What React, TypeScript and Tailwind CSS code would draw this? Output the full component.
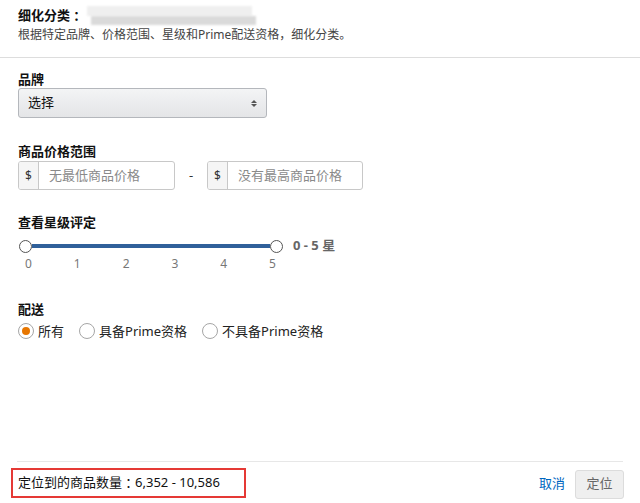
import React from "react";

const font = { fontFamily: "'Noto Sans', 'Noto Sans CJK SC', sans-serif" };
const colonFont = { fontFamily: "'Noto Sans CJK TC', sans-serif" };

function Radio({ checked, label }: { checked?: boolean; label: string }) {
  return (
    <label className="flex items-center gap-[4px] text-[13px] leading-[18px] text-[#222]">
      <span className="flex h-[16px] w-[16px] items-center justify-center rounded-full border border-[#a6a6a6] bg-white">
        {checked && <span className="h-[8px] w-[8px] rounded-full bg-[#e77600]" />}
      </span>
      <span>{label}</span>
    </label>
  );
}

function PriceInput({ width, placeholder }: { width: string; placeholder: string }) {
  return (
    <div className={`flex h-[29px] ${width} overflow-hidden rounded-[3px] border border-[#c8c8c8] bg-white`}>
      <span className="flex w-[20px] shrink-0 items-center justify-center border-r border-[#c8c8c8] bg-[#f5f5f5] text-[12px] text-[#333]">
        $
      </span>
      <span className="flex items-center pl-[10px] text-[13px] text-[#8a8a8a]">{placeholder}</span>
    </div>
  );
}

export default function App() {
  return (
    <div className="flex h-[503px] w-[640px] flex-col bg-white" style={font}>
      {/* header */}
      <div className="border-b border-[#dddddd] px-[18px] pt-[6px] pb-[13px]">
        <div className="flex h-[20px] items-center text-[13px] font-bold text-[#111]">
          <span>细化分类</span>
          <span style={colonFont}>：</span>
          <span className="relative ml-[2px] h-[20px] w-[175px]">
            <span className="absolute left-[2px] top-[0px] h-[10px] w-[165px] bg-[#efefef] blur-[1px]" />
            <span className="absolute left-[6px] top-[10px] h-[9px] w-[165px] bg-[#dadada] blur-[1px]" />
          </span>
        </div>
        <div className="h-[18px] text-[12px] leading-[18px] text-[#444]">
          根据特定品牌、价格范围、星级和Prime配送资格，细化分类。
        </div>
      </div>

      {/* body */}
      <div className="flex flex-1 flex-col px-[18px]">
        <div className="mt-[12px] text-[13px] font-bold leading-[18px] text-[#111]">品牌</div>
        <div className="flex h-[30px] w-[249px] items-center justify-between rounded-[3px] border border-[#b4b7bc] bg-gradient-to-b from-[#f3f4f5] to-[#e4e5e7] pl-[9px] pr-[9px]">
          <span className="text-[13px] text-[#111]">选择</span>
          <span className="flex flex-col items-center gap-[1px]">
            <span className="h-0 w-0 border-x-[3px] border-b-[3px] border-x-transparent border-b-[#555]" />
            <span className="h-0 w-0 border-x-[3px] border-t-[3px] border-x-transparent border-t-[#555]" />
          </span>
        </div>

        <div className="mt-[24px] text-[13px] font-bold leading-[18px] text-[#111]">商品价格范围</div>
        <div className="mt-[1px] flex items-center">
          <PriceInput width="w-[157px]" placeholder="无最低商品价格" />
          <span className="flex w-[32px] justify-center text-[13px] text-[#333]">-</span>
          <PriceInput width="w-[156px]" placeholder="没有最高商品价格" />
        </div>

        <div className="mt-[23px] text-[13px] font-bold leading-[18px] text-[#111]">查看星级评定</div>
        <div className="mt-[6px] flex h-[18px] items-center pl-[1px]">
          <span className="h-[13px] w-[13px] shrink-0 rounded-full border border-[#555] bg-white" />
          <span className="h-[4px] w-[238px] bg-[#30609a]" />
          <span className="h-[13px] w-[13px] shrink-0 rounded-full border border-[#555] bg-white" />
          <span className="ml-[10px] text-[13px] font-bold text-[#666]">0 - 5 星</span>
        </div>
        <div className="mt-[2px] ml-[7px] flex w-[251px] justify-between text-[12px] leading-[14px] text-[#777]">
          <span>0</span>
          <span>1</span>
          <span>2</span>
          <span>3</span>
          <span>4</span>
          <span>5</span>
        </div>

        <div className="mt-[29px] text-[13px] font-bold leading-[18px] text-[#111]">配送</div>
        <div className="mt-[4px] flex items-center gap-[15px]">
          <Radio checked label="所有" />
          <Radio label="具备Prime资格" />
          <Radio label="不具备Prime资格" />
        </div>
        <div className="flex-1" />
      </div>

      {/* footer */}
      <div className="mx-[17px] border-t border-[#e7e7e7]" />
      <div className="flex h-[41px] items-center justify-between pl-[11px] pr-[16px]">
        <span className="flex h-[30px] w-[235px] items-center border-2 border-[#e53935] pl-[5px] text-[13px] text-[#111]">
          定位到的商品数量<span style={colonFont}>：</span>6,352 - 10,586
        </span>
        <div className="flex items-center gap-[10px] pt-[3px]">
          <span className="text-[13px] text-[#0066c0]">取消</span>
          <span className="flex h-[29px] w-[49px] items-center justify-center rounded-[3px] border border-[#dcdcdc] bg-[#efefef] text-[13px] text-[#666]">
            定位
          </span>
        </div>
      </div>
    </div>
  );
}
